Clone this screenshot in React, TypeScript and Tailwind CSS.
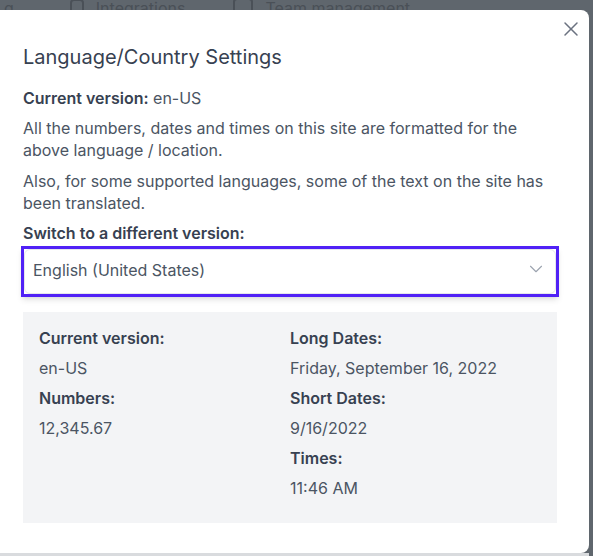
import { ChevronDown, X } from "lucide-react";

const details = [
  [
    { label: "Current version:", value: "en-US" },
    { label: "Numbers:", value: "12,345.67" },
  ],
  [
    { label: "Long Dates:", value: "Friday, September 16, 2022" },
    { label: "Short Dates:", value: "9/16/2022" },
    { label: "Times:", value: "11:46 AM" },
  ],
];

const App = () => {
  return (
    <div className="h-[556px] w-[593px] overflow-hidden bg-[#5f666d] font-['Inter','Noto_Sans',sans-serif]">
      {/* page behind the overlay, mostly hidden */}
      <div className="flex h-[10px] items-end gap-8 overflow-hidden pl-1 text-[16px] leading-[20px] text-[#4a5057]">
        <span className="-mb-[8px]">g</span>
        <span className="-mb-[8px] flex items-center gap-3 pl-6">
          <span className="h-[18px] w-[14px] rounded-sm border-2 border-[#4a5057]" />
          Integrations
        </span>
        <span className="-mb-[8px] flex items-center gap-3 pl-4">
          <span className="h-[20px] w-[20px] rounded border-2 border-[#4a5057]" />
          Team management
        </span>
      </div>

      <div className="relative -ml-[9px] h-[543px] w-[598px] rounded-lg bg-white px-8 pt-[33px]">
        <button className="absolute right-[6px] top-[7px] text-[#6b7280]">
          <X size={24} strokeWidth={1.5} />
        </button>

        <h2 className="text-[20px] leading-[28px] text-[#374151]">
          Language/Country Settings
        </h2>

        <p className="mt-4 text-[16px] leading-[22px] text-[#4b5563]">
          <span className="font-semibold text-[#374151]">Current version:</span>{" "}
          en-US
        </p>
        <p className="mt-2 text-[16px] leading-[22px] text-[#4b5563]">
          All the numbers, dates and times on this site are formatted for the
          above language / location.
        </p>
        <p className="mt-[9px] text-[16px] leading-[22px] text-[#4b5563]">
          Also, for some supported languages, some of the text on the site has
          been translated.
        </p>

        <p className="mt-2 text-[16px] font-semibold leading-[22px] text-[#374151]">
          Switch to a different version:
        </p>

        <div className="-mx-[2px] mt-[2px] border-[3px] border-[#5021f6] shadow-md">
          <div className="flex h-[45px] items-center justify-between rounded-md border border-[#e5e7eb] bg-white pl-2 pr-2">
            <span className="-mt-[3px] text-[16px] text-[#4b5563]">
              English (United States)
            </span>
            <ChevronDown size={22} strokeWidth={1.2} className="-mt-[5px] text-[#9ca3af]" />
          </div>
        </div>

        <div className="mt-[15px] grid h-[211px] grid-cols-2 bg-[#f3f4f6] px-4 pt-[11px]">
          {details.map((col, i) => (
            <div key={i}>
              {col.map((item) => (
                <div key={item.label}>
                  <div className="text-[16px] font-semibold leading-[30px] text-[#374151]">
                    {item.label}
                  </div>
                  <div className="text-[16px] leading-[30px] text-[#4b5563]">
                    {item.value}
                  </div>
                </div>
              ))}
            </div>
          ))}
        </div>
      </div>
      <div className="h-[3px] w-[589px] bg-[#d9dbde]" />
    </div>
  );
};

export default App;
